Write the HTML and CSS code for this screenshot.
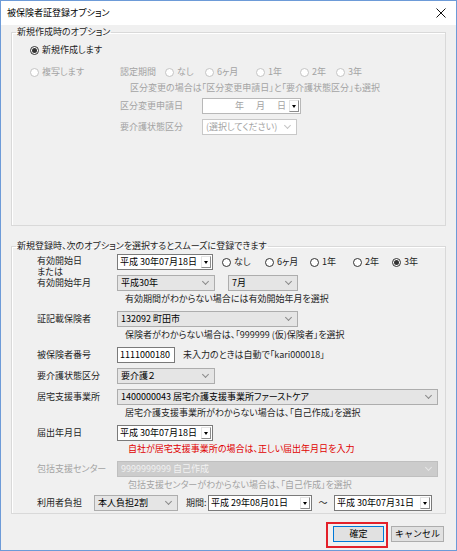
FILE: index.html
```html
<!DOCTYPE html>
<html lang="ja">
<head>
    <meta charset="UTF-8">
    <title>被保険者証登録オプション</title>
    <link rel="stylesheet" href="styles.css">
</head>
<body>

<div class="window">
    <div class="titlebar">
        <span class="title">被保険者証登録オプション</span>
        <span class="close">
            <svg width="10" height="10" viewBox="0 0 10 10"><path d="M0.5 0.5 L9.5 9.5 M9.5 0.5 L0.5 9.5" stroke="#111" stroke-width="1" fill="none"/></svg>
        </span>
    </div>

    <div class="client">
        <!-- 新規作成時 -->
        <fieldset class="group group-new">
            <legend>新規作成時のオプション</legend>
            <div class="group-body">
                <div class="line first">
                    <label class="opt"><span class="radio on"></span>新規作成します</label>
                </div>
                <div class="line copy-line off">
                    <label class="opt copy-opt"><span class="radio"></span>複写します</label>
                    <span class="sub-label">認定期間</span>
                    <div class="opts opts-new">
                        <label class="opt"><span class="radio"></span>なし</label>
                        <label class="opt"><span class="radio"></span>6ヶ月</label>
                        <label class="opt"><span class="radio"></span>1年</label>
                        <label class="opt"><span class="radio"></span>2年</label>
                        <label class="opt"><span class="radio"></span>3年</label>
                    </div>
                </div>
                <div class="new-note off">区分変更の場合は「区分変更申請日」と「要介護状態区分」も選択</div>
                <div class="line ctrl-line off">
                    <span class="sub-label">区分変更申請日</span>
                    <span class="date date-empty"><span class="date-text">年<span class="ymd-gap"></span>月<span class="ymd-gap"></span>日</span><span class="dd"></span></span>
                </div>
                <div class="line ctrl-line off">
                    <span class="sub-label">要介護状態区分</span>
                    <span class="combo combo-white combo-status">(選択してください)</span>
                </div>
            </div>
        </fieldset>

        <!-- 新規登録時 -->
        <fieldset class="group group-reg">
            <legend>新規登録時、次のオプションを選択するとスムーズに登録できます</legend>
            <div class="group-body">
                <div class="row">
                    <span class="label label-two">有効開始日<br>または</span>
                    <span class="date"><span class="date-text">平成 30年07月18日</span><span class="dd"></span></span>
                    <div class="opts opts-reg">
                        <label class="opt"><span class="radio"></span>なし</label>
                        <label class="opt"><span class="radio"></span>6ヶ月</label>
                        <label class="opt"><span class="radio"></span>1年</label>
                        <label class="opt"><span class="radio"></span>2年</label>
                        <label class="opt"><span class="radio on"></span>3年</label>
                    </div>
                </div>

                <div class="row">
                    <span class="label">有効開始年月</span>
                    <span class="combo combo-year">平成30年</span>
                    <span class="combo combo-month">7月</span>
                </div>
                <div class="note">有効期間がわからない場合には有効開始年月を選択</div>

                <div class="row">
                    <span class="label">証記載保険者</span>
                    <span class="combo combo-insurer">132092 町田市</span>
                </div>
                <div class="note">保険者がわからない場合は、「999999 (仮)保険者」を選択</div>

                <div class="row">
                    <span class="label">被保険者番号</span>
                    <span class="textbox">1111000180</span>
                    <span class="hint">未入力のときは自動で「kari000018」</span>
                </div>

                <div class="row">
                    <span class="label">要介護状態区分</span>
                    <span class="combo combo-year">要介護２</span>
                </div>

                <div class="row">
                    <span class="label">居宅支援事業所</span>
                    <span class="combo combo-wide">1400000043 居宅介護支援事業所ファーストケア</span>
                </div>
                <div class="note">居宅介護支援事業所がわからない場合は、「自己作成」を選択</div>

                <div class="row">
                    <span class="label">届出年月日</span>
                    <span class="date"><span class="date-text">平成 30年07月18日</span><span class="dd"></span></span>
                </div>
                <div class="note note-far red">自社が居宅支援事業所の場合は、正しい届出年月日を入力</div>

                <div class="row off">
                    <span class="label">包括支援センター</span>
                    <span class="combo combo-wide combo-disabled">9999999999 自己作成</span>
                </div>
                <div class="note note-far off">包括支援センターがわからない場合は、「自己作成」を選択</div>

                <div class="row last-row">
                    <span class="label label-short">利用者負担</span>
                    <span class="combo combo-burden">本人負担2割</span>
                    <span class="period-label">期間:</span>
                    <span class="date date-from"><span class="date-text">平成 29年08月01日</span><span class="dd"></span></span>
                    <span class="tilde">～</span>
                    <span class="date date-to"><span class="date-text">平成 30年07月31日</span><span class="dd"></span></span>
                </div>
            </div>
        </fieldset>

        <div class="buttons">
            <span class="highlight"><button class="btn btn-default">確定</button></span>
            <button class="btn">キャンセル</button>
        </div>
    </div>
</div>

</body>
</html>
```

FILE: styles.css
```css
/* dialog frame */
body {
    margin: 0;
    background: #fff;
    font-family: "Noto Sans CJK JP", sans-serif;
    font-size: 9px;
    line-height: 12px;
    color: #1e1e1e;
    font-feature-settings: "palt";
}

.window {
    width: 457px;
    height: 551px;
    box-sizing: border-box;
    border: 1px solid #6d9bd8;
    background: #f0f0f0;
    display: flex;
    flex-direction: column;
}

.titlebar {
    flex: none;
    height: 24px;
    background: #fff;
    display: flex;
    align-items: center;
    padding: 0 10px 0 6px;
}

.title {
    font-size: 9px;
    color: #000;
}

.close {
    margin-left: auto;
    display: flex;
}

.client {
    padding: 1px 10px 0 10px;
}

/* group boxes */
.group {
    margin: 0;
    padding: 0;
    border: 1px solid #d9d9d9;
    box-shadow: inset 1px 1px 0 #fff;
}

.group legend {
    margin-left: 4px;
    padding: 0 1px;
}

.group-new .group-body {
    padding: 6px 0 90px 18px;
}

.group-reg {
    margin-top: 14px;
}

.group-reg .group-body {
    padding: 2px 0 2px 25px;
}

.off {
    color: #a3a3a3;
}

.red {
    color: #e00000;
}

/* radio buttons */
.opt {
    display: flex;
    align-items: center;
    white-space: nowrap;
}

.radio {
    width: 9px;
    height: 9px;
    box-sizing: border-box;
    border: 1px solid #333;
    border-radius: 50%;
    background: #fff;
    margin-right: 3px;
    display: inline-flex;
    align-items: center;
    justify-content: center;
    flex: none;
}

.radio.on::after {
    content: "";
    width: 5px;
    height: 5px;
    border-radius: 50%;
    background: #333;
}

.off .radio {
    border-color: #c4c4c4;
}

.opts {
    display: grid;
}

.opts-new {
    grid-template-columns: 40px 51px 44px 36px auto;
    margin-left: 9px;
}

.opts-reg {
    grid-template-columns: 43px 45px 43px 39px auto;
    margin-left: 9px;
}

/* group 1 lines */
.line {
    display: flex;
    align-items: center;
    height: 12px;
}

.copy-line {
    margin-top: 10px;
}

.copy-opt {
    width: 90px;
}

.sub-label {
    width: 82px;
    white-space: nowrap;
}

.copy-line .sub-label {
    width: auto;
}

.new-note {
    margin: 4px 0 0 100px;
    white-space: nowrap;
}

.ctrl-line {
    height: 16px;
    margin-top: 4px;
    padding-left: 90px;
}

.ctrl-line + .ctrl-line {
    margin-top: 5px;
}

/* group 2 rows */
.row {
    display: flex;
    align-items: center;
    height: 16px;
    margin-top: 5px;
    white-space: nowrap;
}

.group-body .row:first-child {
    margin-top: 0;
}

.row.last-row {
    margin-top: 3px;
}

.label {
    width: 80px;
    flex: none;
}

.label-two {
    align-self: flex-start;
    line-height: 11px;
    margin-top: 1px;
}

.label-short {
    width: 57px;
}

.note {
    height: 15px;
    line-height: 15px;
    padding-left: 88px;
    white-space: nowrap;
}

.note-far {
    padding-left: 91px;
}

/* controls */
.date {
    width: 96px;
    height: 16px;
    box-sizing: border-box;
    border: 1px solid #7a7a7a;
    background: #fff;
    display: flex;
    align-items: center;
    padding: 0 1px 0 2px;
    color: #000;
}

.date-empty {
    width: 99px;
    border-color: #b8b8b8;
    color: #a3a3a3;
}

.date-empty .date-text {
    margin-left: auto;
    display: flex;
}

.ymd-gap {
    width: 12px;
}

.dd {
    margin-left: auto;
    width: 10px;
    height: 12px;
    box-sizing: border-box;
    border: 1px solid;
    border-color: #e4e4e4 #8c8c8c #8c8c8c #e4e4e4;
    display: flex;
    align-items: center;
    justify-content: center;
    flex: none;
}

.date-empty .dd {
    margin-left: 3px;
}

.dd::after {
    content: "";
    border-left: 2.5px solid transparent;
    border-right: 2.5px solid transparent;
    border-top: 3px solid #000;
}

.combo {
    height: 16px;
    box-sizing: border-box;
    border: 1px solid #adadad;
    background: #e5e5e5;
    display: flex;
    align-items: center;
    padding: 0 6px 0 3px;
    color: #000;
}

.combo::after {
    content: "";
    margin-left: auto;
    width: 4px;
    height: 4px;
    border-right: 1px solid #8a8a8a;
    border-bottom: 1px solid #8a8a8a;
    transform: translateY(-2px) rotate(45deg);
}

.combo-white {
    background: #fff;
    border-color: #c8c8c8;
    color: #a3a3a3;
}

.combo-white::after {
    border-color: #c4c4c4;
}

.combo-status {
    width: 95px;
}

.combo-year {
    width: 98px;
}

.combo-month {
    width: 70px;
    margin-left: 13px;
}

.combo-insurer {
    width: 181px;
}

.combo-wide {
    width: 321px;
}

.combo-disabled {
    background: #cccccc;
    border-color: #bfbfbf;
    color: #f2f2f2;
}

.combo-disabled::after {
    border-color: #e6e6e6;
}

.combo-burden {
    width: 84px;
}

.textbox {
    width: 58px;
    height: 16px;
    box-sizing: border-box;
    border: 1px solid #7a7a7a;
    background: #fff;
    padding-left: 2px;
    display: flex;
    align-items: center;
    color: #000;
}

.hint {
    margin-left: 8px;
}

.period-label {
    margin-left: 8px;
    width: 22px;
}

.date-from {
    width: 104px;
}

.tilde {
    width: 22px;
    text-align: center;
}

.date-to {
    width: 98px;
}

/* buttons */
.buttons {
    display: flex;
    justify-content: flex-end;
    align-items: flex-start;
    margin-top: 8px;
    padding-right: 2px;
}

.highlight {
    border: 2px solid #e3202a;
    padding: 2px 2px 4px 5px;
    display: flex;
    margin-right: 3px;
}

.btn {
    height: 16px;
    padding: 0;
    font-family: inherit;
    font-size: 9px;
    line-height: 14px;
    background: #e1e1e1;
    border: 1px solid #adadad;
    color: #000;
    width: 53px;
    margin-top: 4px;
}

.btn-default {
    width: 51px;
    border-color: #0078d7;
    margin-top: 0;
}
```
